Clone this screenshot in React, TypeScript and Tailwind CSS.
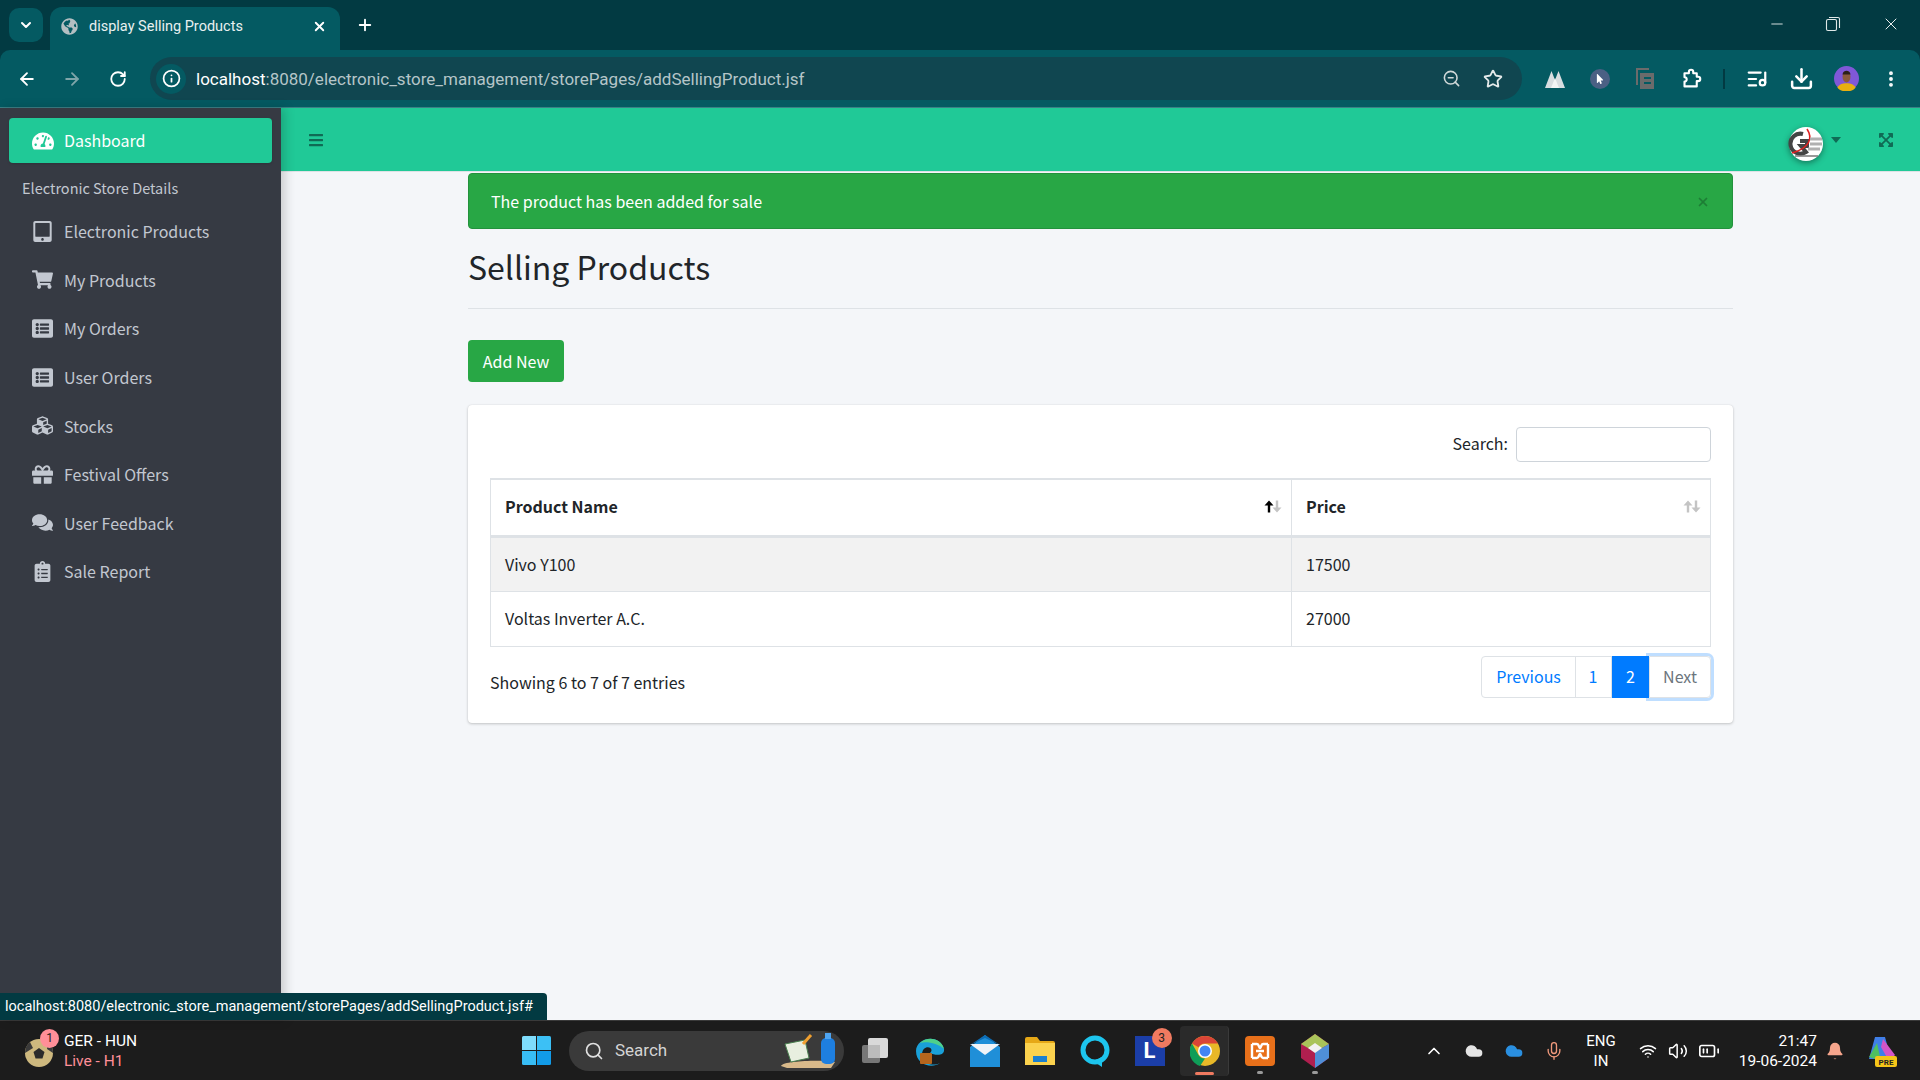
import {
  ArrowLeft,
  ArrowRight,
  ChevronDown,
  ChevronUp,
  Download,
  EllipsisVertical,
  Info,
  ListMusic,
  Minus,
  Mic,
  Plus,
  RotateCw,
  Search,
  Star,
  Volume2,
  Wifi,
  X,
  ZoomOut,
  Bell,
  Cloud,
  BatteryMedium,
} from "lucide-react";
import {
  FaBars,
  FaClipboardList,
  FaComments,
  FaCubes,
  FaExpandArrowsAlt,
  FaGift,
  FaListAlt,
  FaShoppingCart,
  FaTabletAlt,
  FaTachometerAlt,
  FaGlobeAmericas,
  FaMousePointer,
} from "react-icons/fa";

const FONT = "font-['Noto_Sans_CJK_SC','Source_Sans_Pro',sans-serif]";

const NAV = [
  { label: "Electronic Products", icon: FaTabletAlt },
  { label: "My Products", icon: FaShoppingCart },
  { label: "My Orders", icon: FaListAlt },
  { label: "User Orders", icon: FaListAlt },
  { label: "Stocks", icon: FaCubes },
  { label: "Festival Offers", icon: FaGift },
  { label: "User Feedback", icon: FaComments },
  { label: "Sale Report", icon: FaClipboardList },
];

function SortArrows({ active }: { active?: boolean }) {
  return (
    <span className="flex items-center">
      <svg width="10" height="13" viewBox="0 0 10 13" className={active ? "text-black" : "text-[#c4c4c4]"}>
        <path d="M5 0.5 L9.5 5.5 L6.2 5.5 L6.2 12.5 L3.8 12.5 L3.8 5.5 L0.5 5.5 Z" fill="currentColor" />
      </svg>
      <svg width="10" height="13" viewBox="0 0 10 13" className="-ml-[2px] text-[#c4c4c4]">
        <path d="M5 12.5 L9.5 7.5 L6.2 7.5 L6.2 0.5 L3.8 0.5 L3.8 7.5 L0.5 7.5 Z" fill="currentColor" />
      </svg>
    </span>
  );
}

function BrowserChrome() {
  return (
    <div className="shrink-0 bg-[#023a42] font-['Roboto',sans-serif]">
      {/* tab strip */}
      <div className="h-[50px] flex items-end pl-[9px] text-white">
        <div className="w-[34px] h-[34px] mb-[8px] rounded-[10px] bg-[#045a62] flex items-center justify-center shrink-0">
          <ChevronDown size={16} strokeWidth={3} />
        </div>
        <div className="ml-[7px] w-[290px] h-[43px] rounded-t-[12px] bg-[#045a62] flex items-center pl-[11px] pr-[13px] pb-[4px] shrink-0">
          <FaGlobeAmericas size={17} className="text-[#b4bfc2] shrink-0" />
          <span className="ml-[11px] flex-1 text-[14.5px] text-[#e8f0f0] whitespace-nowrap">display Selling Products</span>
          <X size={15} strokeWidth={3} className="shrink-0" />
        </div>
        <div className="ml-[13px] mb-[13px] w-[24px] h-[24px] flex items-center justify-center shrink-0">
          <Plus size={18} strokeWidth={2.5} />
        </div>
        <div className="ml-auto h-full flex items-center pr-[19px] pb-[2px]">
          <Minus size={18} strokeWidth={1.1} />
          <svg width="16" height="16" viewBox="0 0 16 16" fill="none" stroke="currentColor" strokeWidth="1.1" className="ml-[39px] text-[#dfe8e8]">
            <rect x="1.5" y="3.5" width="10" height="11" rx="1.5" />
            <path d="M4 1.5 H13 A1.5 1.5 0 0 1 14.5 3 V12" />
          </svg>
          <X size={20} strokeWidth={1.1} className="ml-[40px]" />
        </div>
      </div>
      {/* toolbar */}
      <div className="h-[58px] bg-[#045a62] rounded-t-[10px] border-b border-[#3c8086] flex items-center pl-[17px] text-white">
        <ArrowLeft size={20} strokeWidth={2.2} className="shrink-0" />
        <ArrowRight size={20} strokeWidth={2.2} className="ml-[25px] shrink-0 text-[#7fa5a9]" />
        <RotateCw size={18} strokeWidth={2.4} className="ml-[27px] shrink-0" />
        <div className="ml-[23px] w-[1372px] h-[43px] shrink-0 rounded-full bg-[#104650] flex items-center pl-[6px] pr-[19px]">
          <div className="w-[30px] h-[30px] rounded-full bg-[#045a62] flex items-center justify-center">
            <Info size={19} strokeWidth={2.2} />
          </div>
          <span className="ml-[10px] mt-[2px] text-[17px] text-[#b5c5c8] whitespace-nowrap">
            <span className="text-white">localhost</span>:8080/electronic_store_management/storePages/addSellingProduct.jsf
          </span>
          <ZoomOut size={19} strokeWidth={2} className="ml-auto text-[#d0d8d8]" />
          <Star size={20} strokeWidth={2.2} className="ml-[22px] text-[#e4eaea]" />
        </div>
        <svg width="20" height="18" viewBox="0 0 20 18" className="ml-[23px] shrink-0">
          <path d="M0 18 L6.5 1 L10 10 L13.5 1 L20 18 Z" fill="#d8dde0" />
          <path d="M6 18 L10 8 L14 18 Z" fill="#f2f4f4" />
        </svg>
        <div className="ml-[25px] w-[20px] h-[20px] shrink-0 rounded-full bg-[#4b6084] flex items-center justify-center">
          <FaMousePointer size={10} />
        </div>
        <svg width="18" height="21" viewBox="0 0 18 21" className="ml-[26px] shrink-0" fill="none" stroke="#6b6b6b" strokeWidth="2">
          <path d="M1 17 V1 H13" />
          <rect x="5" y="6" width="12" height="14" fill="#6b6b6b" />
          <path d="M8 10 H15 M8 15 H15" stroke="#045a62" />
        </svg>
        <svg width="21" height="21" viewBox="0 0 24 24" className="ml-[27px] shrink-0" fill="none" stroke="currentColor" strokeWidth="2.4" strokeLinejoin="round">
          <path d="M4 6 H9 V4.5 a2.5 2.5 0 0 1 5 0 V6 H18 V10 h1.5 a2.5 2.5 0 0 1 0 5 H18 V21 H4 V15.5 a2.5 2.5 0 0 0 0 -5 Z" />
        </svg>
        <div className="ml-[21px] w-[2px] h-[20px] shrink-0 bg-[#023a42]" />
        <ListMusic size={22} strokeWidth={2.4} className="ml-[21px] shrink-0" />
        <Download size={25} strokeWidth={2.4} className="ml-[21px] shrink-0" />
        <svg width="25" height="25" viewBox="0 0 22 22" className="ml-[20px] shrink-0">
          <circle cx="11" cy="11" r="11" fill="#8058d8" />
          <path d="M3 19 C5 14 17 14 19 19 C16 23.5 6 23.5 3 19 Z" fill="#e8b010" />
          <ellipse cx="11" cy="9.5" rx="3.5" ry="5" fill="#8a5a3c" />
          <path d="M7.5 7.5 C7.5 3 14.5 3 14.5 7.5 Z" fill="#2b2018" />
        </svg>
        <EllipsisVertical size={20} strokeWidth={2.6} className="ml-[22px] shrink-0" />
      </div>
    </div>
  );
}

function Sidebar() {
  return (
    <aside className="w-[281px] shrink-0 bg-[#363a43] shadow-[4px_0_10px_rgba(0,0,0,0.18)] z-10 px-[9px] pt-[10px] text-[#c2c7d0]">
      <div className="h-[45px] rounded-[4px] bg-[#20c997] text-white flex items-center pl-[23px] shadow-sm">
        <FaTachometerAlt size={22} />
        <span className="ml-[10px] -mt-[2px] text-[16px] leading-none">Dashboard</span>
      </div>
      <div className="mt-[14px] pl-[13px] h-[22px] text-[14.5px] leading-[22px] text-[#c2c7d0]">Electronic Store Details</div>
      <ul className="mt-[8px]">
        {NAV.map((n) => (
          <li key={n.label} className="h-[48.6px] flex items-center">
            <span className="w-[55px] flex justify-center pl-[12px]">
              <n.icon size={21} />
            </span>
            <span className="text-[16px] leading-none whitespace-nowrap">{n.label}</span>
          </li>
        ))}
      </ul>
    </aside>
  );
}

function Content() {
  return (
    <div className="flex-1 min-w-0 flex flex-col bg-[#f4f6f9]">
      <header className="h-[64px] shrink-0 bg-[#20c997] border-b border-[#dee2e6] flex items-center pl-[27px] pr-[26px] text-[#106b55]">
        <FaBars size={16} />
        <svg width="36" height="36" viewBox="0 0 36 36" className="ml-auto mt-[8px] drop-shadow-[0_2px_3px_rgba(0,0,0,0.4)]">
          <circle cx="18" cy="18" r="17" fill="#fff" />
          <path d="M15 8 A10 10 0 1 0 18 26 L13 20 H19 V15 H12" fill="none" stroke="#444" strokeWidth="4" />
          <path d="M19 3 C25 12 22 22 4 27" fill="none" stroke="#e02020" strokeWidth="1.6" />
          <path d="M22 13 H34 M22 18 H34 M20 23 H32" stroke="#b0b0b0" strokeWidth="3" />
          <path d="M7 30 H30" stroke="#777" strokeWidth="1.5" />
        </svg>
        <svg width="10" height="6" viewBox="0 0 10 6" className="ml-[7px]">
          <path d="M0 0 H10 L5 6 Z" fill="currentColor" />
        </svg>
        <FaExpandArrowsAlt size={16} className="ml-[37px]" />
      </header>

      <main className="px-[187px] text-[#212529]">
        <div className="h-[56px] mt-px rounded-[4px] bg-[#28a745] border border-[#23923d] text-white flex items-center pl-[22px] pr-[22px]">
          <span className="text-[16px] leading-none">The product has been added for sale</span>
          <X size={14} strokeWidth={3} className="ml-auto mt-[2px] text-[#1e7d35]" />
        </div>
        <h1 className="mt-[13px] text-[32px] leading-[48px] font-normal">Selling Products</h1>
        <div className="mt-[18px] border-t border-[#dee2e6]" />
        <button className="mt-[31px] block h-[42px] w-[96px] rounded-[4px] bg-[#28a745] text-white text-[16px] leading-none">Add New</button>

        <section className="mt-[23px] h-[318px] rounded-[4px] bg-white shadow-[0_0_1px_rgba(0,0,0,0.13),0_1px_3px_rgba(0,0,0,0.2)] px-[22px] pt-[22px]">
          <div className="flex items-center justify-end gap-[8px] text-[16px] leading-none">
            <span className="-mt-[3px]">Search:</span>
            <input className="h-[35px] w-[195px] rounded-[4px] border border-[#ced4da] bg-white" />
          </div>
          <table className="mt-[16px] w-full border-collapse text-[16px] table-fixed">
            <thead>
              <tr className="h-[57px] border-t-2 border-b-[3px] border-[#dee2e6]">
                <th className="w-[801px] border-x border-[#dee2e6] pl-[14px] pr-[9px] pb-[2px] text-left font-bold">
                  <div className="flex items-center justify-between">
                    Product Name
                    <SortArrows active />
                  </div>
                </th>
                <th className="border-x border-[#dee2e6] pl-[14px] pr-[9px] pb-[2px] text-left font-bold">
                  <div className="flex items-center justify-between">
                    Price
                    <SortArrows />
                  </div>
                </th>
              </tr>
            </thead>
            <tbody>
              <tr className="h-[55px] bg-[#f2f2f2] border-b border-[#dee2e6]">
                <td className="border-x border-[#dee2e6] px-[14px] pb-px">Vivo Y100</td>
                <td className="border-x border-[#dee2e6] px-[14px] pb-px">17500</td>
              </tr>
              <tr className="h-[55px] border-b border-[#dee2e6]">
                <td className="border-x border-[#dee2e6] px-[14px] pb-px">Voltas Inverter A.C.</td>
                <td className="border-x border-[#dee2e6] px-[14px] pb-px">27000</td>
              </tr>
            </tbody>
          </table>
          <div className="mt-[9px] flex items-start justify-between text-[16px] leading-none">
            <span className="mt-[18px]">Showing 6 to 7 of 7 entries</span>
            <div className="flex h-[42px]">
              <span className="w-[95px] pb-px rounded-l-[4px] border border-[#dee2e6] text-[#007bff] flex items-center justify-center">Previous</span>
              <span className="w-[37px] pb-px -ml-px border-y border-r border-[#dee2e6] text-[#007bff] flex items-center justify-center">1</span>
              <span className="w-[37px] pb-px bg-[#007bff] text-white flex items-center justify-center">2</span>
              <span className="w-[62px] pb-px rounded-r-[4px] border border-[#dee2e6] text-[#6c757d] flex items-center justify-center shadow-[0_0_0_3px_rgba(0,123,255,0.25)]">Next</span>
            </div>
          </div>
        </section>
      </main>
    </div>
  );
}

function Badge({ text, className }: { text: string; className: string }) {
  return (
    <span className={`absolute flex items-center justify-center rounded-full text-[#222] text-[12px] leading-none ${className}`}>{text}</span>
  );
}

function AppCell({ children, dot }: { children: React.ReactNode; dot?: boolean }) {
  return (
    <div className="w-[55px] h-[50px] shrink-0 relative flex items-center justify-center">
      {children}
      {dot && <span className="absolute bottom-[2px] left-[25px] w-[6px] h-[3px] rounded-full bg-[#9a9a9a]" />}
    </div>
  );
}

function Taskbar() {
  return (
    <footer className="h-[60px] shrink-0 bg-[#1c1c1c] border-t border-[#3a3a3a] flex items-center relative font-['Roboto',sans-serif] text-white">
      {/* score widget */}
      <div className="w-[522px] shrink-0 flex items-center pl-[25px]">
        <div className="w-[28px] h-[28px] relative mt-[4px]">
          <svg width="28" height="28" viewBox="0 0 28 28">
            <circle cx="14" cy="14" r="14" fill="#cdb87e" />
            <path d="M14 9 L19.5 13 L17.5 19.5 H10.5 L8.5 13 Z" fill="#2b2b2b" />
            <path d="M0 14 A14 14 0 0 1 5 3 L8 9 Z M23 3 A14 14 0 0 1 28 14 L22 10 Z" fill="#3a3a3a" />
          </svg>
          <Badge text="1" className="-top-[10px] left-[15px] w-[19px] h-[19px] bg-[#ff8f98]" />
        </div>
        <div className="ml-[11px] text-[15.5px] leading-[20px] whitespace-nowrap">
          <div>GER - HUN</div>
          <div className="text-[#ff8f98]">Live - H1</div>
        </div>
      </div>

      {/* windows start */}
      <svg width="29" height="29" viewBox="0 0 29 29" className="shrink-0">
        <path d="M0 1.5 A1.5 1.5 0 0 1 1.5 0 H14 V14 H0 Z" fill="#7fdcfb" />
        <path d="M15 0 H27.5 A1.5 1.5 0 0 1 29 1.5 V14 H15 Z" fill="#3cc0f5" />
        <path d="M0 15 H14 V29 H1.5 A1.5 1.5 0 0 1 0 27.5 Z" fill="#38bdf5" />
        <path d="M15 15 H29 V27.5 A1.5 1.5 0 0 1 27.5 29 H15 Z" fill="#129be8" />
      </svg>
      <div className="ml-[18px] w-[275px] h-[40px] shrink-0 rounded-full bg-[#3a3a3a] flex items-center pl-[15px] relative">
        <Search size={20} strokeWidth={2} className="text-[#e0e0e0]" />
        <span className="ml-[11px] text-[17px] text-[#d4d4d4]">Search</span>
        <svg width="60" height="36" viewBox="0 0 60 36" className="absolute right-[5px] top-[1px]">
          <path d="M2 34 C4 28 50 28 56 30 L52 36 H8 Z" fill="#d8b98a" />
          <path d="M6 12 L26 8 L30 26 L12 30 Z" fill="#e8efe0" stroke="#4a8050" />
          <path d="M24 12 L32 3" stroke="#f0a030" strokeWidth="3" />
          <rect x="42" y="6" width="14" height="26" rx="5" fill="#1e7fe0" />
          <rect x="46" y="1" width="6" height="6" fill="#4ea4f0" />
        </svg>
      </div>

      {/* pinned apps */}
      <div className="ml-[3px] flex items-center">
        <AppCell>
          <svg width="30" height="30" viewBox="0 0 30 30">
            <rect x="8" y="2" width="20" height="20" rx="2" fill="#d9d9d9" />
            <rect x="2" y="9" width="18" height="18" rx="2" fill="#777" />
            <rect x="8" y="9" width="12" height="13" fill="#bbb" />
          </svg>
        </AppCell>
        <AppCell>
          <svg width="32" height="32" viewBox="0 0 32 32">
            <path d="M2 16 C2 2 26 -2 30 14 C31 22 20 20 16 18 C22 12 8 8 8 20 C8 28 18 32 26 28 C18 34 2 30 2 16 Z" fill="#1aa0d8" />
            <path d="M6 8 C14 0 28 4 30 14 C24 8 12 6 6 8 Z" fill="#4fd08a" />
            <rect x="6" y="18" width="12" height="11" rx="1" fill="#b5651d" />
          </svg>
        </AppCell>
        <AppCell>
          <svg width="30" height="32" viewBox="0 0 30 32">
            <path d="M15 0 L30 12 V32 H0 V12 Z" fill="#1f8fd8" />
            <path d="M0 9 H30 L15 20 Z" fill="#f0f4f8" />
            <path d="M0 10 L15 0 L30 10 L15 3 Z" fill="#0c6cb5" />
          </svg>
        </AppCell>
        <AppCell>
          <svg width="30" height="28" viewBox="0 0 30 28">
            <path d="M0 2 A2 2 0 0 1 2 0 H12 L15 4 H28 A2 2 0 0 1 30 6 V28 H0 Z" fill="#e6a817" />
            <rect x="0" y="6" width="30" height="22" fill="#fbd24e" />
            <rect x="8" y="19" width="14" height="6" fill="#1b80d0" />
          </svg>
        </AppCell>
        <AppCell>
          <svg width="30" height="32" viewBox="0 0 30 32" fill="none">
            <circle cx="15" cy="15" r="12" stroke="#1dc5ee" strokeWidth="5" />
            <path d="M13 26 L22 32 L22 22 Z" fill="#1dc5ee" />
          </svg>
        </AppCell>
        <AppCell>
          <div className="w-[30px] h-[30px] bg-[#1b3ea8] relative flex items-center justify-center text-white font-bold text-[22px] leading-none">
            L
            <Badge text="3" className="-top-[8px] left-[17px] w-[20px] h-[20px] bg-[#f07a60] font-normal" />
          </div>
        </AppCell>
        <AppCell>
          <div className="absolute inset-y-0 left-[3px] w-[49px] rounded-[4px] bg-[#2a2a2a] border-r border-[#3a3a3a]" />
          <svg width="30" height="30" viewBox="0 0 30 30" className="relative">
            <circle cx="15" cy="15" r="15" fill="#e8b828" />
            <path d="M15 0 A15 15 0 0 1 28 7.5 H15 A7.5 7.5 0 0 0 8.5 11.2 L2 7.5 A15 15 0 0 1 15 0 Z" fill="#db4437" />
            <path d="M2 7.5 L8.5 19 A7.5 7.5 0 0 0 15 22.5 L10 30 A15 15 0 0 1 2 7.5 Z" fill="#0f9d58" />
            <circle cx="15" cy="15" r="7" fill="#fff" />
            <circle cx="15" cy="15" r="5.5" fill="#4285f4" />
          </svg>
          <span className="absolute bottom-[1px] left-[18px] w-[19px] h-[3px] rounded-full bg-[#f07a60]" />
        </AppCell>
        <AppCell dot>
          <svg width="30" height="30" viewBox="0 0 30 30">
            <rect width="30" height="30" rx="4" fill="#e8701a" />
            <path d="M7 8 H12 C14 8 14 12 15 12 C16 12 16 8 18 8 H23 M7 22 H12 C14 22 14 18 15 18 C16 18 16 22 18 22 H23 M7 8 V22 M23 8 V22 M11 15 H19" stroke="#fff" strokeWidth="2.4" fill="none" />
          </svg>
        </AppCell>
        <AppCell dot>
          <svg width="28" height="34" viewBox="0 0 28 34">
            <path d="M14 0 L28 10 V24 L14 34 L0 24 V10 Z" fill="#b01f4f" />
            <path d="M14 0 L28 10 L14 18 L0 10 Z" fill="#a9c45a" />
            <path d="M28 10 V24 L14 34 V18 Z" fill="#4f8fd8" />
            <path d="M14 9 L21 14 L14 19 L7 14 Z" fill="#f2f2f2" />
          </svg>
        </AppCell>
      </div>

      {/* tray */}
      <ChevronUp size={20} strokeWidth={2} className="ml-[82px] shrink-0" />
      <Cloud size={20} fill="#e4e4e4" strokeWidth={0} className="ml-[20px] shrink-0" />
      <Cloud size={20} fill="#2a8fe0" strokeWidth={0} className="ml-[20px] shrink-0" />
      <Mic size={20} strokeWidth={1.6} className="ml-[20px] shrink-0 text-[#f0997c]" />
      <div className="ml-[19px] w-[36px] shrink-0 text-[15px] leading-[20px] text-center">
        <div>ENG</div>
        <div>IN</div>
      </div>
      <Wifi size={18} strokeWidth={2} className="ml-[20px] shrink-0" />
      <Volume2 size={20} strokeWidth={1.8} className="ml-[11px] shrink-0" />
      <BatteryMedium size={22} strokeWidth={1.8} className="ml-[10px] shrink-0" />
      <div className="ml-[11px] w-[86px] shrink-0 text-[15.5px] leading-[20px] text-right whitespace-nowrap">
        <div>21:47</div>
        <div>19-06-2024</div>
      </div>
      <Bell size={20} fill="#f6a58c" strokeWidth={0} className="ml-[8px] shrink-0" />
      <svg width="32" height="32" viewBox="0 0 32 32" className="ml-[20px] shrink-0">
        <path d="M10 2 H20 L26 24 H4 Z" fill="#3f7fe8" />
        <path d="M18 4 L30 20 L24 26 L16 12 Z" fill="#d455c8" />
        <path d="M4 22 L12 8 L16 26 Z" fill="#50c060" />
        <rect x="10" y="21" width="22" height="11" rx="2" fill="#f5c518" />
        <text x="21" y="30" textAnchor="middle" fontSize="8" fontWeight="700" fill="#222" fontFamily="Roboto">PRE</text>
      </svg>
    </footer>
  );
}

export default function App() {
  return (
    <div className={`relative h-screen w-full overflow-hidden flex flex-col ${FONT}`}>
      <BrowserChrome />
      <div className="flex-1 min-h-0 flex">
        <Sidebar />
        <Content />
      </div>
      <div className="absolute left-0 bottom-[60px] z-20 h-[27px] w-[547px] rounded-tr-[4px] bg-[#023a42] pl-[5px] font-['Roboto',sans-serif] text-[14.5px] leading-[27px] text-white whitespace-nowrap">
        localhost:8080/electronic_store_management/storePages/addSellingProduct.jsf#
      </div>
      <Taskbar />
    </div>
  );
}
